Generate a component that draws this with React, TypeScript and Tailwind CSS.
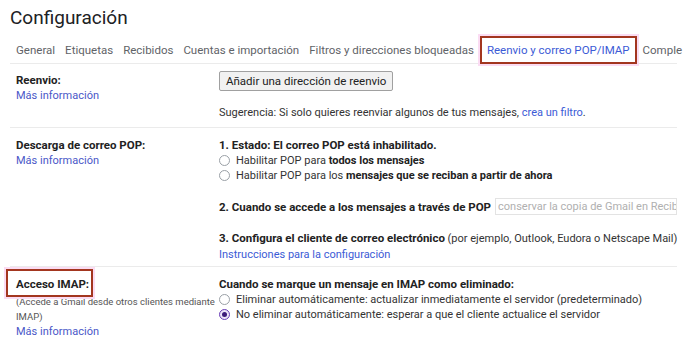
import React from "react"

const tabs = [
  "General",
  "Etiquetas",
  "Recibidos",
  "Cuentas e importación",
  "Filtros y direcciones bloqueadas",
]

function Radio({ checked }: { checked?: boolean }) {
  return checked ? (
    <span className="inline-flex items-center justify-center w-[11px] h-[11px] rounded-full border border-[#6b3fb8] bg-[#ece4f7] shrink-0">
      <span className="w-[5px] h-[5px] rounded-full bg-[#3c1a7a]" />
    </span>
  ) : (
    <span className="inline-block w-[11px] h-[11px] rounded-full border border-[#9aa0a6] bg-white shrink-0" />
  )
}

function Row({ left, children, className = "" }: { left: React.ReactNode; children: React.ReactNode; className?: string }) {
  return (
    <div className={`flex border-b border-[#ebebeb] ${className}`}>
      <div className="w-[209px] shrink-0 pl-[6px]">{left}</div>
      <div className="flex-1 min-w-0">{children}</div>
    </div>
  )
}

export default function App() {
  return (
    <div
      className="w-[688px] h-[352px] overflow-hidden bg-white text-[#222] text-[11px] leading-[16px]"
      style={{ fontFamily: "Roboto, 'Liberation Sans', Arial, sans-serif" }}
    >
      <div className="pl-[10px] pt-[6px] text-[19px] leading-[24px] text-[#202124]">Configuración</div>

      <div className="ml-[10px] mr-[11px] mt-[6px] h-[28px] flex items-center border-b border-[#ebebeb] text-[11.5px] text-[#5f6368] whitespace-nowrap">
        <div className="flex gap-[10px] pl-[6px]">
          {tabs.map((t) => (
            <span key={t}>{t}</span>
          ))}
        </div>
        <div className="ml-[6px] h-[28px] px-[5px] flex items-center border-2 border-[#a3361f] text-[#3c5bd6] shadow-[0_0_0_2px_#fbdcf3]">
          Reenvio y correo POP/IMAP
        </div>
        <span className="ml-[6px]">Comple</span>
      </div>

      <div className="ml-[10px] mr-[11px]">
        <Row left={
          <div className="pt-[8px]">
            <div className="font-bold text-[11.5px]">Reenvio:</div>
            <div className="text-[#4a57c8]">Más información</div>
          </div>
        } className="h-[64px]">
          <div className="pt-[7px]">
            <button className="h-[20px] px-[6px] border border-[#a0a0a0] rounded-[2px] bg-[#f1f1f1] text-[11.5px] leading-[16px] text-[#222]">
              Añadir una dirección de reenvio
            </button>
            <div className="mt-[14px] text-[#333]">
              Sugerencia: Si solo quieres reenviar algunos de tus mensajes, <span className="text-[#3c5bd6]">crea un filtro</span>.
            </div>
          </div>
        </Row>

        <Row left={
          <div className="pt-[9px]">
            <div className="font-bold text-[11.5px]">Descarga de correo POP:</div>
            <div className="text-[#4a57c8]">Más información</div>
          </div>
        } className="h-[139px]">
          <div className="pt-[9px] text-[#333]">
            <div className="font-bold text-[11.5px] text-[#222]">1. Estado: El correo POP está inhabilitado.</div>
            <div className="flex items-center gap-[6px] leading-[15px]">
              <Radio />
              <span>Habilitar POP para <b className="text-[#222]">todos los mensajes</b></span>
            </div>
            <div className="flex items-center gap-[6px] leading-[15px]">
              <Radio />
              <span>Habilitar POP para los <b className="text-[#222]">mensajes que se reciban a partir de ahora</b></span>
            </div>
            <div className="mt-[15px] flex items-center whitespace-nowrap">
              <b className="text-[11.5px] text-[#222]">2. Cuando se accede a los mensajes a través de POP</b>
              <span className="ml-[4px] px-[2px] h-[17px] border border-[#e3e3e3] text-[#b0b0b0] overflow-hidden flex-1 min-w-0 leading-[15px]">
                conservar la copia de Gmail en Recibi
              </span>
            </div>
            <div className="mt-[15px] whitespace-nowrap">
              <b className="text-[11.5px] text-[#222]">3. Configura el cliente de correo electrónico</b> (por ejemplo, Outlook, Eudora o Netscape Mail)
            </div>
            <div className="text-[#3c5bd6]">Instrucciones para la configuración</div>
          </div>
        </Row>

        <div className="flex">
          <div className="w-[209px] shrink-0 pl-[6px] pt-[9px]">
            <div className="relative inline-block">
              <span className="font-bold text-[11.5px]">Acceso IMAP:</span>
              <span className="absolute -left-[10px] -top-[7px] w-[87px] h-[28px] border-2 border-[#a3361f] shadow-[0_0_0_2px_#fbdcf3]" />
            </div>
            <div className="mt-[1px] text-[9.5px] leading-[15px] text-[#555] whitespace-nowrap">(Accede a Gmail desde otros clientes mediante</div>
            <div className="text-[9.5px] leading-[15px] text-[#555]">IMAP)</div>
            <div className="text-[#4a57c8]">Más información</div>
          </div>
          <div className="flex-1 pt-[9px] text-[#333]">
            <div className="font-bold text-[11.5px] text-[#222]">Cuando se marque un mensaje en IMAP como eliminado:</div>
            <div className="flex items-center gap-[6px] leading-[15px]">
              <Radio />
              <span>Eliminar automáticamente: actualizar inmediatamente el servidor (predeterminado)</span>
            </div>
            <div className="flex items-center gap-[6px] leading-[15px]">
              <Radio checked />
              <span>No eliminar automáticamente: esperar a que el cliente actualice el servidor</span>
            </div>
          </div>
        </div>
      </div>
    </div>
  )
}
